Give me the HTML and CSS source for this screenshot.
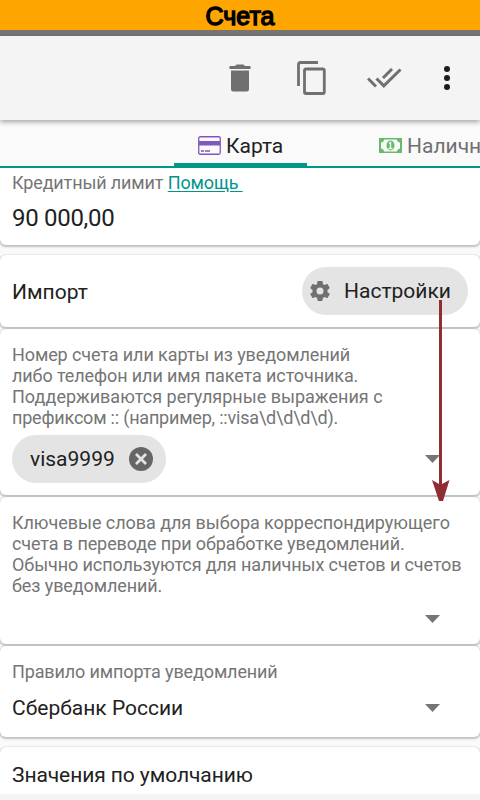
FILE: index.html
```html
<!DOCTYPE html>
<html lang="ru">
<head>
<meta charset="utf-8">
<title>Счета</title>
<link rel="stylesheet" href="styles.css">
</head>
<body>
<div class="screen">
  <h1 class="title">Счета</h1>
  <header class="toolbar">
    <svg class="trash" width="22" height="28" viewBox="0 0 22 28"><path d="M.5 2H6l1.500-1.500h7L16 2h5.500v3H.5zM2 6.500h18V25q0 2.500-2.500 2.500h-13Q2 27.500 2 25z" fill="#707070"/></svg>
    <svg class="copy" width="29" height="34" viewBox="0 0 29 34" fill="none" stroke="#707070" stroke-width="2.800"><path d="M1.500 25V3.500q0-2 2-2H21"/><rect x="7.500" y="8" width="19.800" height="24.500" rx="1.500"/></svg>
    <svg class="checks" width="35" height="20" viewBox="0 0 35 20" fill="none" stroke="#707070" stroke-width="3"><path d="M1 10.500l8 8M9.500 10.500l7.300 7.300L33.500 1.500M16 10l9-9"/></svg>
    <svg class="more" width="6" height="24" viewBox="0 0 6 24" fill="#1d1d1d"><circle cx="3" cy="3" r="3"/><circle cx="3" cy="12" r="3"/><circle cx="3" cy="21" r="3"/></svg>
  </header>
  <nav class="tabs">
    <div class="tab active">
      <svg width="23" height="19" viewBox="0 0 23 19"><rect x=".75" y=".75" width="21.500" height="17.500" rx="1.500" fill="#fafafa" stroke="#7e57c2" stroke-width="1.300"/><path d="M1 5h21v4.500H1z" fill="#7e57c2"/><path d="M3 15h3M7 15h5" stroke="#7e57c2" stroke-width="1.300"/></svg>
      <span class="tab-card">Карта</span>
    </div>
    <div class="tab cash">
      <svg width="23" height="15" viewBox="0 0 23 15"><path d="M0 0h23v15H0z" fill="#66bb6a"/><path d="M5 1.500h13q0 2.500 3 3v6q-3 .5-3 3H5q0-2.500-3-3v-6q3-.5 3-3z" fill="#fafafa"/><ellipse cx="11.500" cy="7.500" rx="4" ry="5" fill="#66bb6a"/><path d="M10 5.500l1.500-1V10M9.500 10.500h4" fill="none" stroke="#fafafa" stroke-width="1.300"/></svg>
      <span class="tab-cash">Наличн</span>
    </div>
  </nav>
  <main class="list">
    <section class="card limit">
      <div class="label limit-label">Кредитный лимит <a>Помощь&nbsp;</a></div>
      <div class="value amount">90 000,00</div>
    </section>
    <section class="card import">
      <span class="value import-title">Импорт</span>
      <div class="chip settings">
        <svg width="20" height="20" viewBox="2 2 20 20"><path fill="#707070" d="M19.430 12.980c.04-.32.07-.64.07-.98s-.03-.66-.07-.98l2.110-1.650c.19-.15.24-.42.12-.64l-2-3.460c-.12-.22-.39-.3-.61-.22l-2.490 1c-.52-.4-1.080-.73-1.690-.98l-.38-2.650C14.460 2.180 14.250 2 14 2h-4c-.25 0-.46.18-.49.42l-.38 2.650c-.61.25-1.170.59-1.690.98l-2.490-1c-.23-.09-.49 0-.61.22l-2 3.460c-.13.22-.07.49.12.64l2.110 1.650c-.04.32-.07.65-.07.98s.03.66.07.98l-2.110 1.650c-.19.15-.24.42-.12.64l2 3.460c.12.22.39.3.61.22l2.490-1c.52.4 1.080.73 1.690.98l.38 2.650c.03.24.24.42.49.42h4c.25 0 .46-.18.49-.42l.38-2.650c.61-.25 1.170-.59 1.690-.98l2.490 1c.23.09.49 0 .61-.22l2-3.460c.12-.22.07-.49-.12-.64zM12 15.500a3.500 3.500 0 1 1 0-7 3.500 3.500 0 0 1 0 7z"/></svg>
        <span class="settings-text">Настройки</span>
      </div>
    </section>
    <section class="card numbers">
      <p class="label"><span class="tight">Номер счета или карты из уведомлений<br>либо телефон или имя пакета источника.</span><br>Поддерживаются регулярные выражения с<br><span class="tighter">префиксом :: (например, ::visa\d\d\d\d).</span></p>
      <div class="row chips">
        <div class="chip visa"><span class="visa-text">visa9999</span>
          <svg width="24" height="24" viewBox="0 0 24 24"><circle cx="12" cy="12" r="12" fill="#666"/><path d="M7 7l10 10M17 7L7 17" stroke="#e4e4e4" stroke-width="2.800"/></svg>
        </div>
        <i class="caret"></i>
      </div>
    </section>
    <section class="card keywords">
      <p class="label"><span class="snug">Ключевые слова для выбора корреспондирующего</span><br><span class="tight">счета в переводе при обработке уведомлений.<br>Обычно используются для наличных счетов и счетов<br>без уведомлений.</span></p>
      <div class="row blank"><i class="caret"></i></div>
    </section>
    <section class="card rule">
      <div class="label rule-label">Правило импорта уведомлений</div>
      <div class="row"><span class="value bank">Сбербанк России</span><i class="caret"></i></div>
    </section>
    <section class="card defaults"><span class="value defaults-text">Значения по умолчанию</span></section>
  </main>
  <svg class="arrow" width="18" height="202" viewBox="0 0 18 202"><path d="M7 0h3v184l7.500-4L11 201H7L0 180l7 4z" fill="#8e2d33"/></svg>
</div>
</body>
</html>
```

FILE: styles.css
```css
* { box-sizing: border-box; }
body { margin: 0; font-family: Roboto, "Liberation Sans", sans-serif; }
.screen {
  position: relative;
  display: flex;
  flex-direction: column;
  width: 480px;
  height: 800px;
  overflow: hidden;
  background: #f4f4f4;
}
.title {
  flex: none;
  height: 36px;
  margin: 0;
  border-bottom: 6px solid #757575;
  background: #ffa500;
  color: #000;
  font: 400 25px/32px "Liberation Sans", sans-serif;
  text-align: center;
  -webkit-text-stroke: 1.4px #000;
}
.toolbar {
  position: relative;
  z-index: 1;
  display: flex;
  flex: none;
  align-items: center;
  height: 84px;
  padding-left: 229px;
  background: #f4f4f4;
  box-shadow: 0 2px 5px rgba(0, 0, 0, .35);
}
.copy { margin-left: 46px; }
.checks { margin-left: 41px; }
.more { margin-left: 42px; }
.tabs {
  display: flex;
  flex: none;
  height: 48px;
  padding-left: 174px;
  border-bottom: 2px solid #009688;
  background: #fafafa;
  color: #212121;
  font-size: 21px;
}
.tab {
  display: flex;
  flex: none;
  align-items: center;
  height: 46px;
  padding-top: 5px;
  white-space: nowrap;
}
.active { width: 133px; padding-left: 24px; border-bottom: 3px solid #009688; padding-top: 8px; }
.cash { padding-left: 72px; color: #707070; }
.tab span { margin-left: 5px; }
.list { flex: none; height: 626px; overflow: hidden; background: #fafafa; }
.card {
  margin-bottom: 2px;
  border-radius: 6px;
  background: #fff;
  box-shadow: 0 1px 2px 1px rgba(0, 0, 0, .23);
}
.label { margin: 0; color: #757575; font-size: 18px; line-height: 21px; white-space: nowrap; }
.label a { color: #009688; text-decoration: underline; text-underline-offset: 2px; }
.snug { letter-spacing: -.05px; }
.tight { letter-spacing: -.1px; }
.tighter { letter-spacing: -.2px; }
.value { color: #212121; font-size: 21px; line-height: 26px; white-space: nowrap; }
.limit { height: 77px; margin-bottom: 10px; padding: 4px 12px 0; border-radius: 0 0 6px 6px; }
.limit-label, .rule-label { letter-spacing: -.13px; }
.amount { margin-top: 12px; font-size: 24px; letter-spacing: -.3px; }
.import { display: flex; align-items: center; justify-content: space-between; height: 72px; padding: 0 12px; }
.import-title { padding-top: 2px; }
.chip {
  display: flex;
  align-items: center;
  height: 48px;
  border-radius: 24px;
  background: #e4e4e4;
  color: #212121;
  font-size: 21px;
  white-space: nowrap;
}
.settings { width: 166px; padding-left: 8px; gap: 14px; }
.numbers { height: 166px; padding: 15px 12px 0; }
.row { display: flex; align-items: center; justify-content: space-between; padding-right: 28px; }
.chips { height: 48px; margin-top: 7px; }
.visa { width: 154px; padding: 0 13px 0 18px; justify-content: space-between; }
.caret {
  width: 15px;
  height: 8px;
  background: #757575;
  clip-path: polygon(0 0, 100% 0, 50% 100%);
}
.keywords { height: 147px; padding: 15px 12px 0; }
.blank { justify-content: flex-end; height: 44px; margin-top: 1px; }
.rule { height: 91px; margin-bottom: 10px; padding: 15px 12px 0; }
.rule .row { height: 30px; margin-top: 11px; }
.defaults { height: 60px; padding: 15px 12px 0; }
.defaults-text { letter-spacing: -.08px; }
.arrow { position: absolute; top: 300px; left: 432px; }
```
